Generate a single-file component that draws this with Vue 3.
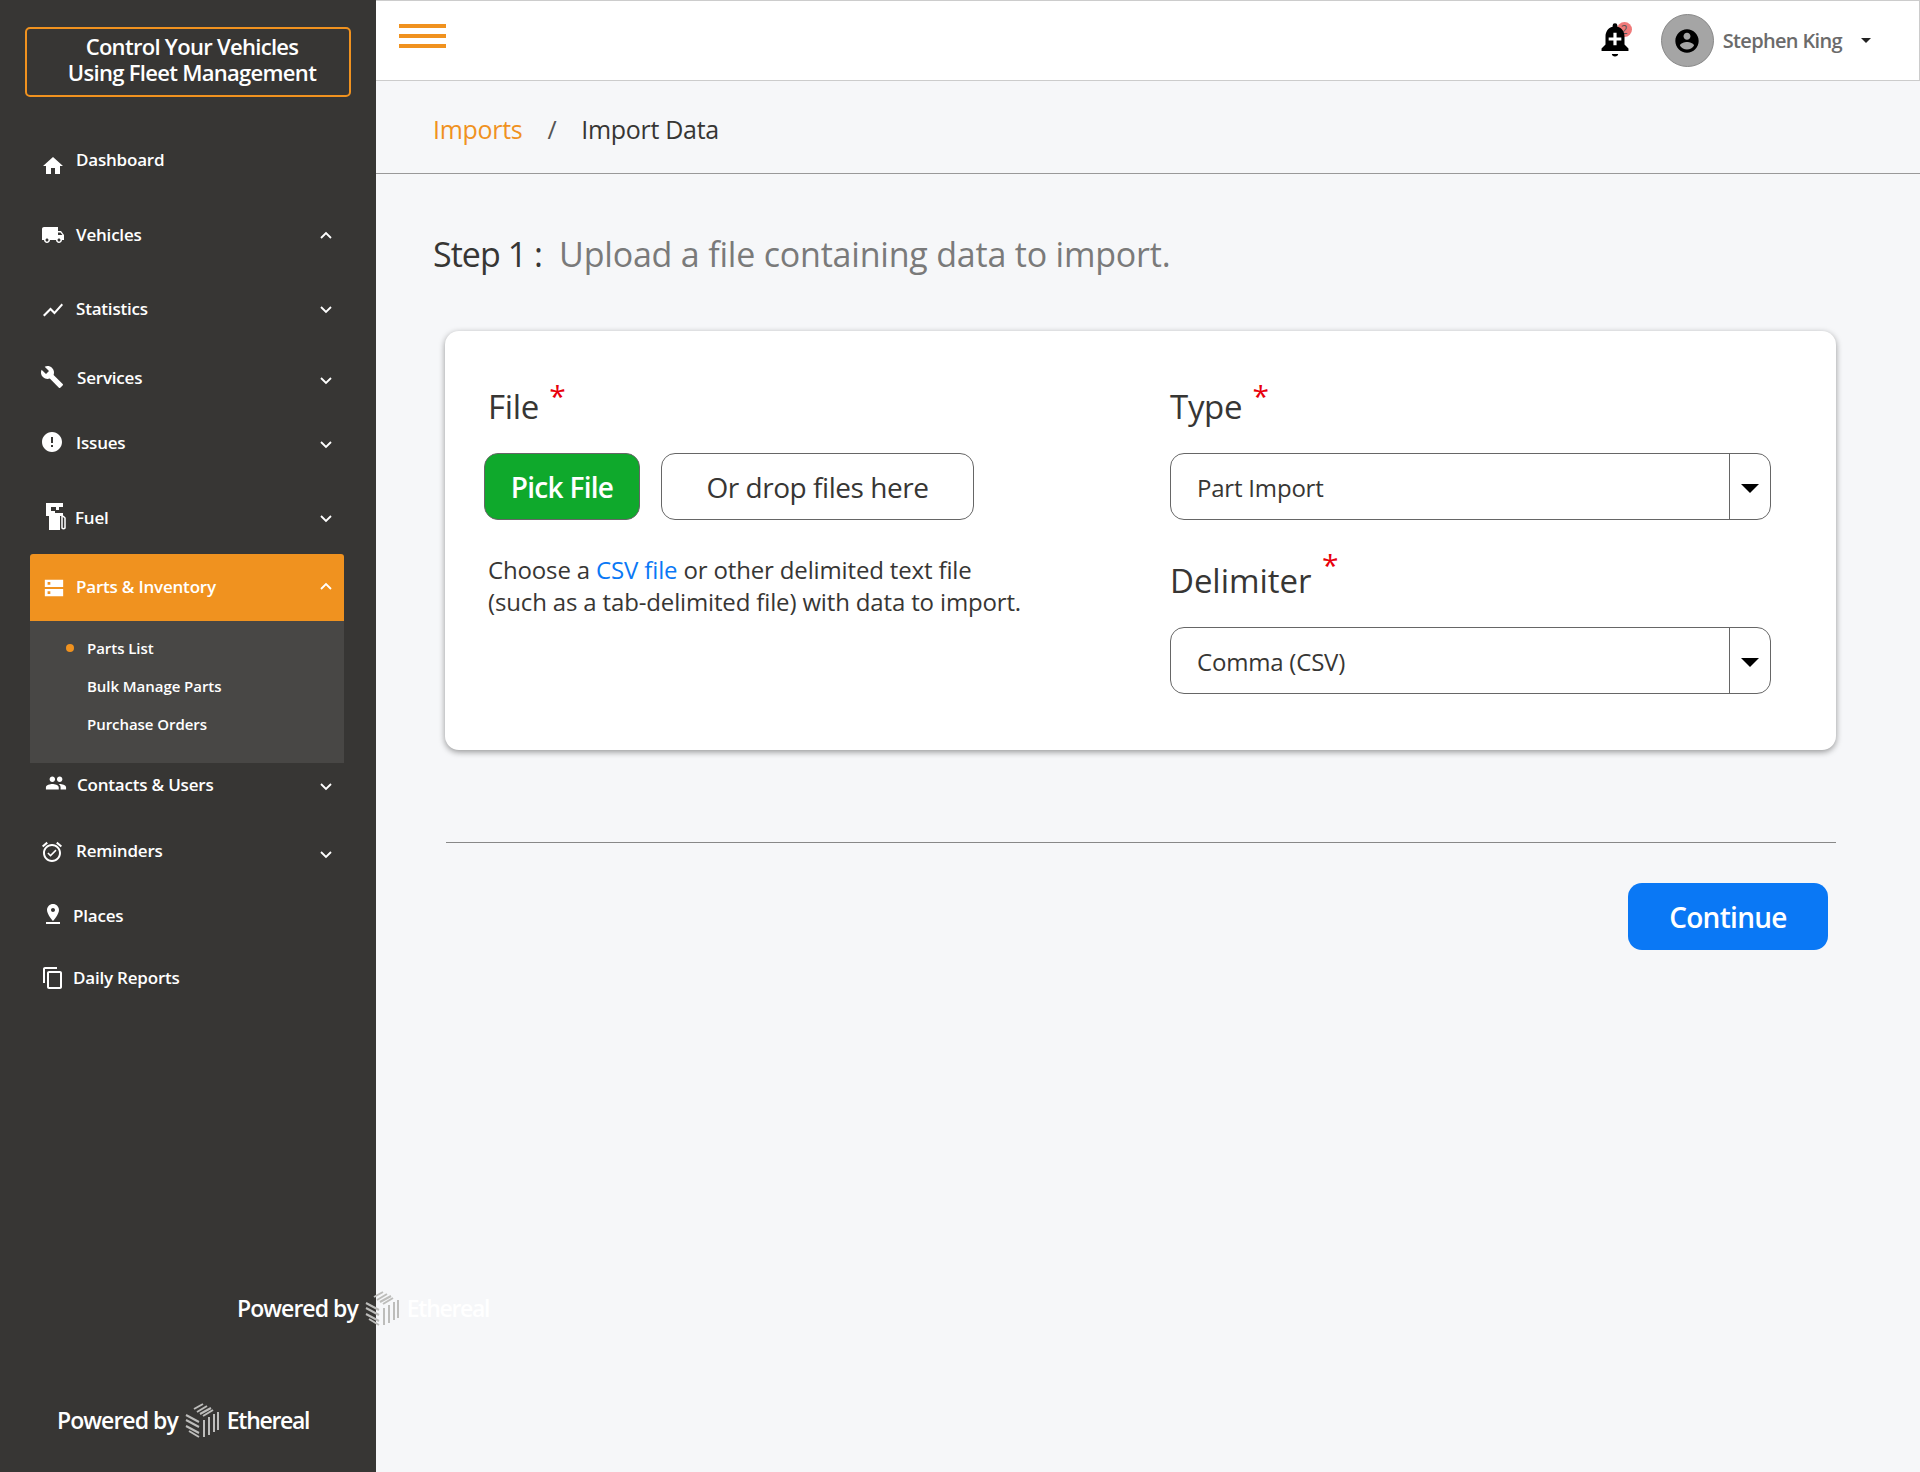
<template>
  <div class="layout">
    <aside class="sidebar">
      <div class="brand">Control Your Vehicles<br />Using Fleet Management</div>

      <nav class="nav">
        <template v-for="item in navItems" :key="item.label">
          <div
            class="nav-row"
            :class="{ 'nav-row--active': item.active }"
            :style="{ marginTop: item.top + 'px' }"
          >
            <span class="nav-icon" :style="{ transform: `translate(${item.ix}px, ${item.iy}px)` }">
              <svg v-if="item.label === 'Fuel'" class="fuel-icon" viewBox="0 0 20 27">
                <path d="M0 0h17v7h-8v3h8v3h-3v14H3V13H0V0z" fill="#fff" fill-rule="evenodd" />
                <path d="M5 4h5v4H5zM13 4h4v3h-4z" fill="#373634" />
                <path d="M16 13v12a2 2 0 0 0 3 0V15l-2-2" fill="none" stroke="#fff" stroke-width="1.5" />
              </svg>
              <svg v-else :width="item.size" :height="item.size" viewBox="0 0 24 24" fill="#fff">
                <path :d="item.icon" fill-rule="evenodd" />
              </svg>
            </span>
            <span class="nav-label" :style="{ left: item.tx + 'px' }">{{ item.label }}</span>
            <svg
              v-if="item.chevron"
              class="chevron"
              :style="{ marginTop: item.cy + 'px' }"
              viewBox="0 0 14 9"
            >
              <path :d="item.chevron === 'up' ? 'M2 7l5-5 5 5' : 'M2 2l5 5 5-5'" fill="none" stroke="#fff" stroke-width="1.8" />
            </svg>
          </div>
          <div v-if="item.active" class="submenu">
            <div v-for="sub in subItems" :key="sub.label" class="sub-row">
              <span v-if="sub.current" class="sub-dot"></span>
              {{ sub.label }}
            </div>
          </div>
        </template>
      </nav>

      <div class="powered powered--stray">
        <span>Powered by</span>
        <svg class="ethereal-logo" viewBox="0 0 34 36">
          <g fill="none" stroke="#bdbdbb" stroke-width="2">
            <path d="M9 7l9-5M12 10l10-6M15 12l11-6M18 14l10-6" />
            <path d="M1 13l13 7M1 18l13 7M1 24l13 7M4 29l10 6" />
            <path d="M19 18v17M24 15v18M29 12v18M33 10v18" />
          </g>
        </svg>
        <span class="powered-name">Ethereal</span>
      </div>

      <div class="powered powered--footer">
        <span>Powered by</span>
        <svg class="ethereal-logo" viewBox="0 0 34 36">
          <g fill="none" stroke="#bdbdbb" stroke-width="2">
            <path d="M9 7l9-5M12 10l10-6M15 12l11-6M18 14l10-6" />
            <path d="M1 13l13 7M1 18l13 7M1 24l13 7M4 29l10 6" />
            <path d="M19 18v17M24 15v18M29 12v18M33 10v18" />
          </g>
        </svg>
        <span class="powered-name">Ethereal</span>
      </div>
    </aside>

    <main class="main">
      <header class="topbar">
        <div class="hamburger"><span></span><span></span><span></span></div>
        <div class="topbar-right">
          <span class="bell">
            <span class="bell-badge">2</span>
            <svg class="bell-icon" width="38" height="38" viewBox="0 0 24 24">
              <path d="M12 23c1.100 0 2-.6 2-1.500h-4c0 .9.9 1.500 2 1.500zM20.500 19.500v-1.500l-2.500-2.500v-5c0-3-1.600-5.500-4.500-6.200V3.500a1.500 1.500 0 0 0-3 0v.8C7.600 5 6 7.500 6 10.500v5L3.500 18v1.500z" fill="#000" />
              <path d="M11 8h2v3h3v2h-3v3h-2v-3H8v-2h3z" fill="#fff" />
            </svg>
          </span>
          <span class="avatar">
            <svg width="28" height="28" viewBox="0 0 24 24" fill="#000">
              <path fill-rule="evenodd" d="M12 2C6.480 2 2 6.480 2 12s4.480 10 10 10 10-4.480 10-10S17.520 2 12 2zm0 3c1.660 0 3 1.340 3 3s-1.340 3-3 3-3-1.340-3-3 1.340-3 3-3zm0 14.200c-2.500 0-4.710-1.280-6-3.220.030-1.990 4-3.080 6-3.080 1.990 0 5.970 1.090 6 3.080-1.290 1.940-3.500 3.220-6 3.220z" />
            </svg>
          </span>
          <span class="user-name">Stephen King</span>
          <span class="user-caret"></span>
        </div>
      </header>

      <div class="breadcrumb">
        <a class="crumb-link">Imports</a>
        <span class="crumb-sep">/</span>
        <span class="crumb-current">Import Data</span>
      </div>

      <section class="content">
        <h1 class="step"><span class="step-num">Step 1 :</span><span class="step-text">Upload a file containing data to import.</span></h1>

        <div class="card">
          <div class="col col--file">
            <label class="field-label">File <span class="req">*</span></label>
            <div class="file-actions">
              <button class="btn-pick">Pick File</button>
              <div class="dropzone">Or drop files here</div>
            </div>
            <p class="hint">
              Choose a <a class="hint-link">CSV file</a> or other delimited text file<br />
              (such as a tab-delimited file) with data to import.
            </p>
          </div>
          <div class="col col--selects">
            <label class="field-label">Type <span class="req">*</span></label>
            <div class="select"><span class="select-value">Part Import</span><span class="select-arrow"><i></i></span></div>
            <label class="field-label field-label--delim">Delimiter <span class="req req--high">*</span></label>
            <div class="select"><span class="select-value">Comma (CSV)</span><span class="select-arrow"><i></i></span></div>
          </div>
        </div>

        <hr class="divider" />
        <div class="actions">
          <button class="btn-continue">Continue</button>
        </div>
      </section>
    </main>
  </div>
</template>

<script setup>
// Rows sit at uneven distances in the original sidebar, so each one carries its own offsets
const navItems = [
  { label: 'Dashboard', top: 44, tx: 76, ix: 0, iy: 5, size: 24, icon: 'M10 20v-6h4v6h5v-8h3L12 3 2 12h3v8z' },
  { label: 'Vehicles', top: 35, tx: 76, ix: 0, iy: -1, size: 24, chevron: 'up', cy: -1, icon: 'M20 8h-3V4H3c-1.100 0-2 .9-2 2v11h2c0 1.660 1.340 3 3 3s3-1.340 3-3h6c0 1.660 1.340 3 3 3s3-1.340 3-3h2v-5l-3-4zM6 18.500c-.83 0-1.500-.67-1.500-1.500s.67-1.500 1.500-1.500 1.500.67 1.500 1.500-.67 1.500-1.500 1.500zm13.500-9l1.960 2.500H17V9.500h2.500zm-1.500 9c-.83 0-1.500-.67-1.500-1.500s.67-1.500 1.500-1.500 1.500.67 1.500 1.500-.67 1.500-1.500 1.500z' },
  { label: 'Statistics', top: 34, tx: 76, ix: 0, iy: 0, size: 24, chevron: 'down', cy: -1, icon: 'M3.500 18.490l6-6.010 4 4L22 6.920l-1.410-1.410-7.090 7.970-4-4L2 16.990z' },
  { label: 'Services', top: 29, tx: 77, ix: -1, iy: -2, size: 26, chevron: 'down', cy: 3, icon: 'M22.700 19l-9.100-9.100c.9-2.300.4-5-1.500-6.900-2-2-5-2.400-7.400-1.300L9 6 6 9 1.600 4.700C.4 7.100.9 10.100 2.900 12.100c1.900 1.900 4.600 2.400 6.900 1.500l9.100 9.100c.4.400 1 .4 1.400 0l2.300-2.300c.5-.4.500-1.100.1-1.400z' },
  { label: 'Issues', top: 25, tx: 76, ix: -1, iy: -2, size: 24, chevron: 'down', cy: 1, icon: 'M12 2C6.480 2 2 6.480 2 12s4.480 10 10 10 10-4.480 10-10S17.520 2 12 2zm1 15h-2v-2h2v2zm0-4h-2V7h2v6z' },
  { label: 'Fuel', top: 35, tx: 75, ix: 5, iy: -3, size: 24, chevron: 'down', cy: -1 },
  { label: 'Parts & Inventory', top: 15, tx: 76, ix: 2, iy: 0, size: 22, chevron: 'up', cy: -3, active: true, icon: 'M2 3h20v8H2zm3 2.500v3h3v-3zM2 13h20v8H2zm3 2.500v3h3v-3z' },
  { label: 'Contacts & Users', top: 3, tx: 77, ix: 4, iy: -3, size: 22, chevron: 'down', cy: 1, icon: 'M16 11c1.660 0 2.990-1.340 2.990-3S17.660 5 16 5c-1.660 0-3 1.340-3 3s1.340 3 3 3zm-8 0c1.660 0 2.990-1.340 2.990-3S9.660 5 8 5C6.340 5 5 6.340 5 8s1.340 3 3 3zm0 2c-2.330 0-7 1.170-7 3.500V19h14v-2.500c0-2.330-4.670-3.500-7-3.500zm8 0c-.29 0-.62.020-.97.050 1.160.84 1.970 1.970 1.970 3.450V19h6v-2.500c0-2.330-4.670-3.500-7-3.500z' },
  { label: 'Reminders', top: 26, tx: 76, ix: -1, iy: 0, size: 24, chevron: 'down', cy: 4, icon: 'M22 5.720l-4.600-3.860-1.290 1.530 4.600 3.860L22 5.720zM7.880 3.390L6.600 1.860 2 5.710l1.290 1.530 4.590-3.850zM12 4c-4.970 0-9 4.030-9 9s4.020 9 9 9c4.970 0 9-4.030 9-9s-4.030-9-9-9zm0 16c-3.870 0-7-3.130-7-7s3.130-7 7-7 7 3.130 7 7-3.130 7-7 7zm-1.460-5.470L8.410 12.400l-1.060 1.060 3.180 3.180 6-6-1.060-1.060-4.930 4.950z' },
  { label: 'Places', top: 25, tx: 73, ix: 0, iy: -3, size: 24, icon: 'M18 8c0-3.310-2.690-6-6-6S6 4.690 6 8c0 4.500 6 11 6 11s6-6.500 6-11zm-8 0c0-1.100.9-2 2-2s2 .9 2 2-.89 2-2 2c-1.100 0-2-.9-2-2zM5 20v2h14v-2H5z' },
  { label: 'Daily Reports', top: 22, tx: 73, ix: 0, iy: -1, size: 24, icon: 'M16 1H4c-1.100 0-2 .9-2 2v14h2V3h12V1zm3 4H8c-1.100 0-2 .9-2 2v14c0 1.100.9 2 2 2h11c1.100 0 2-.9 2-2V7c0-1.100-.9-2-2-2zm0 16H8V7h11v14z' },
]

const subItems = [
  { label: 'Parts List', current: true },
  { label: 'Bulk Manage Parts' },
  { label: 'Purchase Orders' },
]
</script>

<style>
body {
  background: #f6f7f9;
}
</style>

<style scoped>
.layout {
  display: flex;
  height: 1472px;
  overflow: hidden;
  font-family: "Open Sans", "Noto Sans", sans-serif;
  color: #373634;
}

.sidebar {
  position: relative;
  z-index: 1;
  flex: 0 0 376px;
  background: #373634;
  color: #fff;
  padding-top: 27px;
  box-sizing: border-box;
}

.brand {
  width: 326px;
  height: 70px;
  margin-left: 25px;
  box-sizing: border-box;
  border: 2px solid #f0921f;
  border-radius: 5px;
  text-align: center;
  font-size: 22px;
  line-height: 26px;
  padding: 4px 0 0 8px;
  letter-spacing: -0.7px;
  font-weight: 600;
}

.nav {
  font-size: 17px;
  letter-spacing: -0.2px;
  font-weight: 600;
}

.nav-row {
  position: relative;
  display: flex;
  align-items: center;
  height: 40px;
  padding-left: 41px;
  margin-right: 32px;
}

.nav-row--active {
  height: 67px;
  margin-left: 30px;
  padding-left: 11px;
  background: #f0921f;
  border-radius: 3px 3px 0 0;
}

.nav-icon {
  display: flex;
  align-items: center;
  width: 24px;
}

.fuel-icon {
  width: 20px;
  height: 27px;
}

.nav-label {
  position: absolute;
  left: 76px;
  margin-top: -3px;
}

.nav-row--active .nav-label {
  margin-left: -30px;
}

.chevron {
  position: absolute;
  right: 11px;
  width: 14px;
  height: 9px;
}

.submenu {
  height: 142px;
  margin: 0 32px 0 30px;
  padding-top: 8px;
  box-sizing: border-box;
  background: #484745;
  font-size: 15px;
  letter-spacing: -0.05px;
}

.sub-row {
  position: relative;
  height: 38px;
  line-height: 38px;
  padding-left: 57px;
}

.sub-dot {
  position: absolute;
  left: 36px;
  top: 15px;
  width: 8px;
  height: 8px;
  border-radius: 50%;
  background: #f0921f;
}

.powered {
  position: absolute;
  display: flex;
  align-items: center;
  font-size: 23px;
  letter-spacing: -0.95px;
  font-weight: 600;
  white-space: nowrap;
}

.powered-name {
  letter-spacing: -1.3px;
}

.powered--stray {
  left: 237px;
  top: 1289px;
}

.powered--footer {
  left: 57px;
  top: 1401px;
}

.ethereal-logo {
  width: 34px;
  height: 38px;
  margin: 0 8px 0 7px;
}

.main {
  flex: 1;
  min-width: 0;
  background: #f6f7f9;
}

.topbar {
  display: flex;
  align-items: center;
  justify-content: space-between;
  height: 81px;
  box-sizing: border-box;
  background: #fff;
  border: 1px solid #ccc;
  border-width: 1px 1px 1px 0;
  padding: 0 48px 0 23px;
}

.hamburger {
  display: flex;
  flex-direction: column;
  gap: 6px;
  width: 47px;
  margin-top: -9px;
}

.hamburger span {
  height: 4px;
  background: #f0921f;
}

.topbar-right {
  display: flex;
  align-items: center;
}

.bell {
  position: relative;
  display: flex;
  margin: -4px 27px 0 0;
}

.bell-icon {
  position: relative;
}

.bell-badge {
  position: absolute;
  right: 2px;
  top: 2px;
  width: 15px;
  height: 15px;
  border-radius: 50%;
  background: #f07a7a;
  color: #555;
  font-size: 12px;
  line-height: 15px;
  text-align: center;
}

.avatar {
  display: flex;
  align-items: center;
  justify-content: center;
  width: 53px;
  height: 53px;
  box-sizing: border-box;
  border: 1px solid #888;
  border-radius: 50%;
  background: #a5a5a5;
}

.user-name {
  margin: -1px 0 0 9px;
  font-size: 20px;
  font-weight: 600;
  letter-spacing: -0.65px;
  color: #6b6b6b;
}

.user-caret {
  margin-left: 19px;
  border: 5px solid transparent;
  border-top: 5px solid #222;
  border-bottom: 0;
}

.breadcrumb {
  display: flex;
  align-items: center;
  height: 93px;
  box-sizing: border-box;
  padding: 3px 0 0 57px;
  border-bottom: 1px solid #999;
  font-size: 25px;
  letter-spacing: -0.3px;
}

.crumb-link {
  color: #f0921f;
}

.crumb-sep {
  margin: 0 25px;
  color: #555;
}

.content {
  padding: 0 84px 0 70px;
}

.step {
  margin: 57px 0 0 -13px;
  font-size: 34px;
  line-height: 46px;
  font-weight: 400;
  letter-spacing: -0.2px;
}

.step-num {
  margin-right: 17px;
  letter-spacing: -0.95px;
}

.step-text {
  color: #7a7a7a;
}

.card {
  display: flex;
  height: 419px;
  margin-top: 54px;
  margin-left: -1px;
  box-sizing: border-box;
  background: #fff;
  border-radius: 14px;
  box-shadow: 0 2px 6px rgba(0, 0, 0, 0.4);
  padding-top: 52px;
}

.col--file {
  width: 725px;
  padding-left: 39px;
  box-sizing: border-box;
}

.col--selects {
  width: 601px;
}

.field-label {
  display: block;
  height: 48px;
  font-size: 33px;
  line-height: 48px;
  letter-spacing: -0.3px;
  font-weight: 400;
  white-space: nowrap;
}

.field-label--delim {
  margin-top: 37px;
  height: 46px;
  letter-spacing: -0.05px;
}

.col--file .field-label {
  margin-left: 4px;
}

.req {
  position: relative;
  top: -12px;
  margin-left: 2px;
  color: #e8000b;
  font-size: 30px;
}

.req--high {
  top: -17px;
}

.file-actions {
  display: flex;
  gap: 21px;
  margin-top: 22px;
}

.btn-pick {
  width: 156px;
  height: 67px;
  border: 1px solid #666;
  border-radius: 14px;
  background: #0fa92c;
  color: #fff;
  font: inherit;
  font-size: 28px;
  font-weight: 600;
  letter-spacing: -0.7px;
}

.dropzone {
  display: flex;
  align-items: center;
  justify-content: center;
  width: 313px;
  height: 67px;
  box-sizing: border-box;
  border: 1px solid #666;
  border-radius: 14px;
  font-size: 28px;
  letter-spacing: -0.45px;
}

.hint {
  margin: 34px 0 0 4px;
  font-size: 24px;
  line-height: 32px;
  letter-spacing: -0.15px;
}

.hint-link {
  color: #0a78f5;
}

.select {
  display: flex;
  align-items: stretch;
  width: 601px;
  height: 67px;
  margin-top: 22px;
  box-sizing: border-box;
  border: 1px solid #666;
  border-radius: 14px;
  font-size: 24px;
  letter-spacing: -0.2px;
}

.field-label--delim + .select {
  margin-top: 24px;
}

.select-value {
  flex: 1;
  align-self: center;
  padding: 2px 0 0 26px;
}

.select-arrow {
  display: flex;
  align-items: center;
  justify-content: center;
  width: 40px;
  border-left: 1px solid #666;
}

.select-arrow i {
  border: 9px solid transparent;
  border-top: 9px solid #000;
  border-bottom: 0;
  margin-top: 3px;
}

.divider {
  height: 1px;
  margin: 92px 0 0;
  border: 0;
  background: #888;
}

.actions {
  display: flex;
  justify-content: flex-end;
  margin-top: 40px;
  padding-right: 8px;
}

.btn-continue {
  width: 200px;
  height: 67px;
  border: 0;
  border-radius: 14px;
  background: #0a78f5;
  color: #fff;
  font: inherit;
  font-size: 28px;
  font-weight: 600;
  letter-spacing: -0.7px;
}
</style>
